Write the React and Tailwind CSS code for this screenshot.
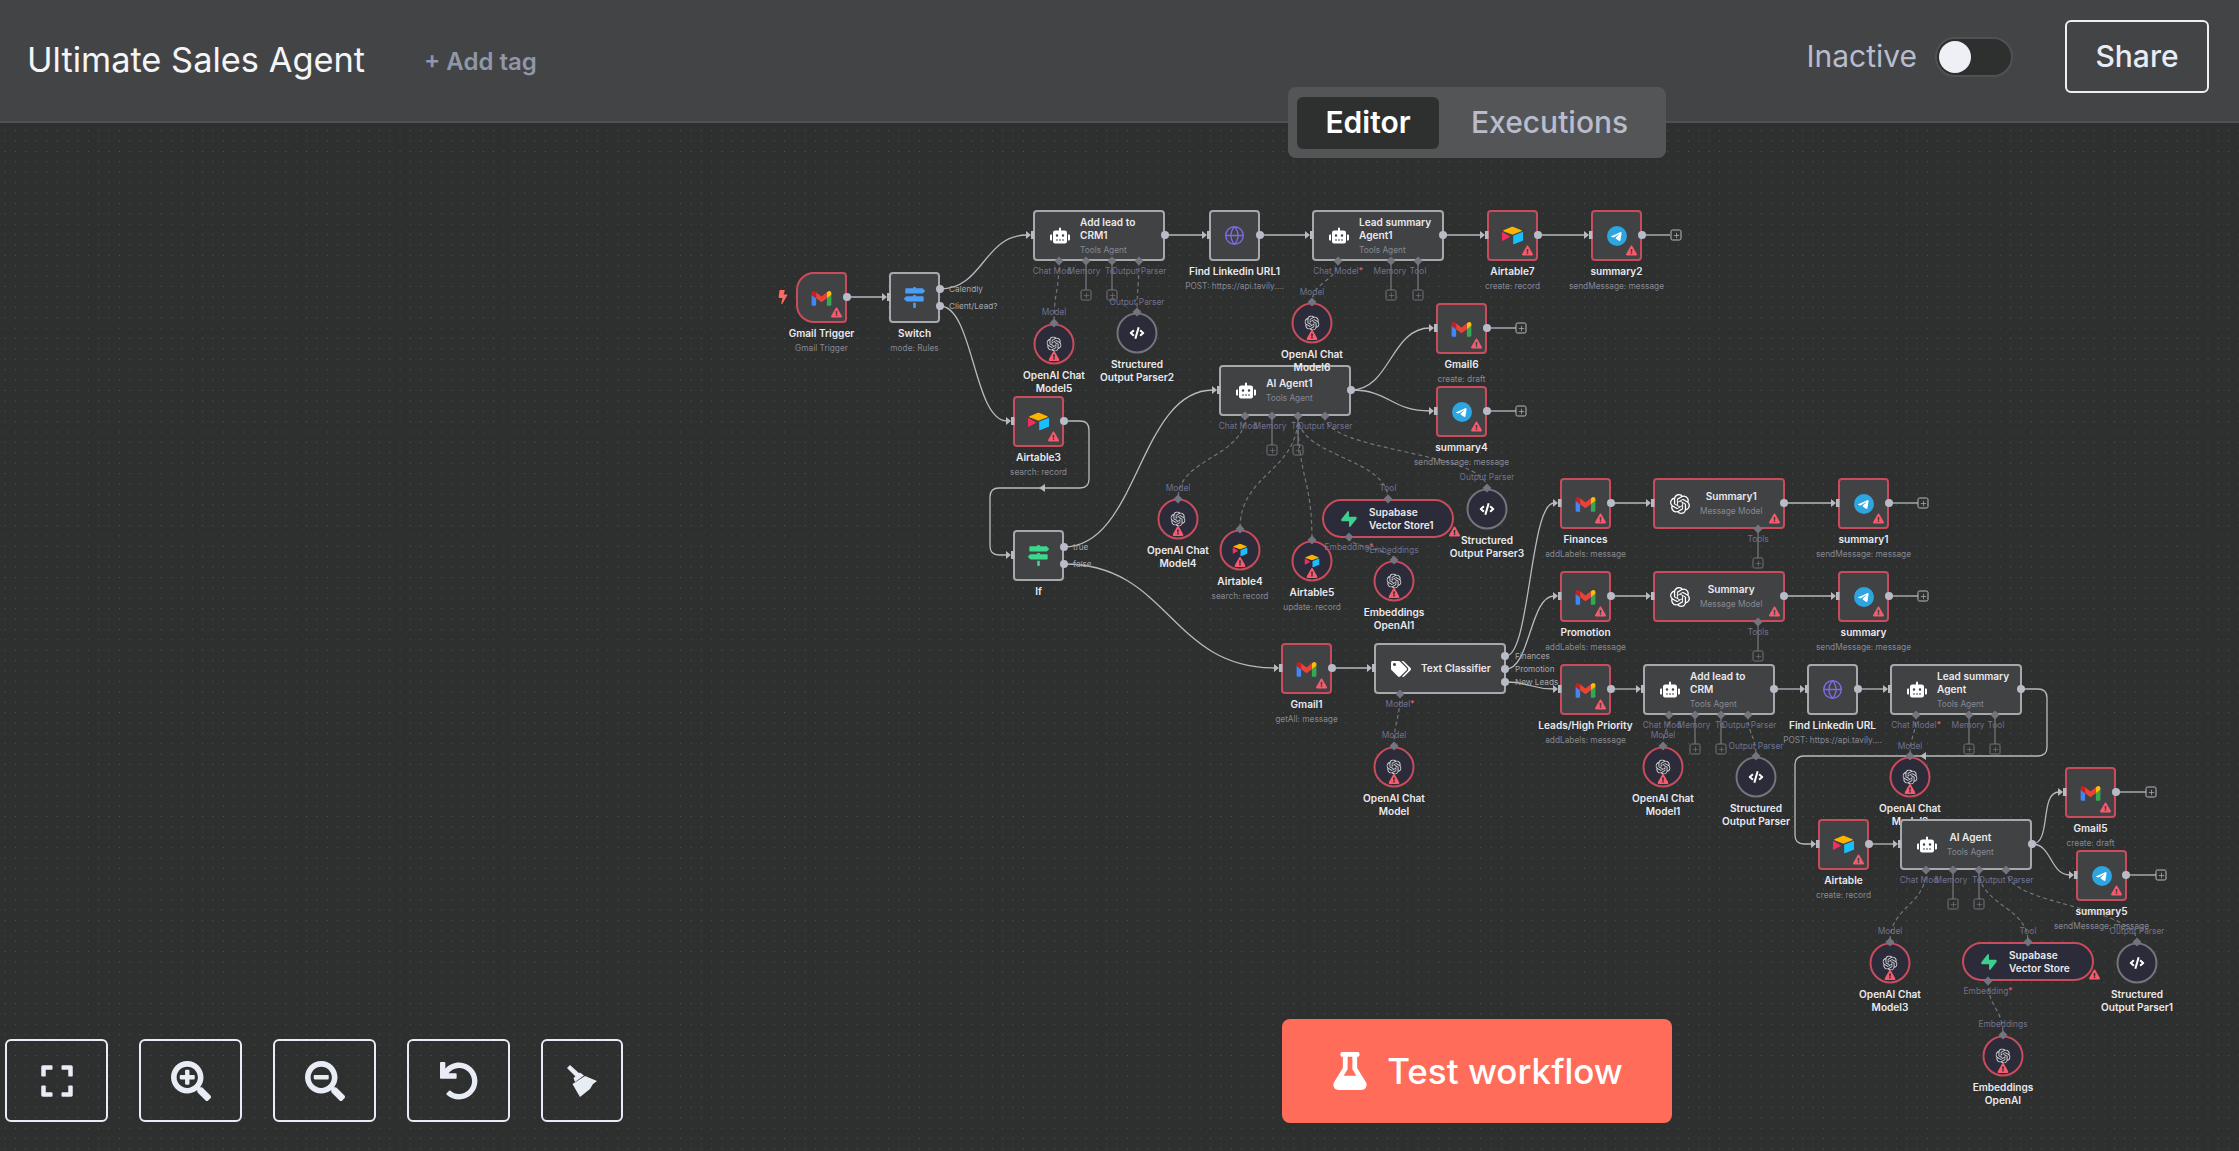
import React from "react";
import { Globe, Plus } from "lucide-react";
import {
  FaBolt,
  FaCode,
  FaExclamationTriangle,
  FaExpand,
  FaFlask,
  FaMapSigns,
  FaRobot,
  FaSearchMinus,
  FaSearchPlus,
  FaTags,
  FaUndo,
} from "react-icons/fa";
import { SiOpenai, SiSupabase, SiTelegram } from "react-icons/si";

const GmailIcon = () => (
  <svg width="21" height="16" viewBox="0 1.8 24 19.4">
    <path fill="#4285f4" d="M1.636 21h3.819v-9.27L0 7.64v11.73C0 20.27.73 21 1.636 21z" />
    <path fill="#34a853" d="M18.545 21h3.819c.904 0 1.636-.732 1.636-1.636V7.64l-5.455 4.09z" />
    <path fill="#fbbc04" d="M18.545 4.64v7.09L24 7.64V5.457c0-2.023-2.309-3.178-3.927-1.964z" />
    <path fill="#ea4335" d="M5.455 11.73V4.64L12 9.548l6.545-4.908v7.09L12 16.64z" />
    <path fill="#c5221f" d="M0 5.457V7.64l5.455 4.09V4.64L3.927 3.493C2.309 2.28 0 3.434 0 5.457z" />
  </svg>
);

const AirtableIcon = ({ size = 21 }) => (
  <svg width={size} height={size} viewBox="0 1.5 24 21">
    <path fill="#fcb400" d="M11.99 2c-.43 0-.87.09-1.28.26L1.78 5.92c-.5.2-.49.91.01 1.11l8.98 3.56c.79.31 1.67.31 2.46 0l8.98-3.56c.5-.2.5-.91.01-1.11l-8.96-3.66A3.3 3.3 0 0 0 11.99 2z" />
    <path fill="#18bfff" d="M23.4 8.06a.6.6 0 0 0-.22.04l-10.01 3.88a.6.6 0 0 0-.38.56v8.9a.6.6 0 0 0 .82.55l10.01-3.88a.6.6 0 0 0 .38-.56V8.65a.6.6 0 0 0-.6-.59z" />
    <path fill="#f82b60" d="M.68 8.1a.65.65 0 0 0-.68.72v8.54c0 .45.48.74.88.53l8.1-4.22a.36.36 0 0 0 .02-.63L.98 8.17a.54.54 0 0 0-.3-.07z" />
  </svg>
);

const TelegramIcon = () => (
  <div className="relative flex h-5 w-5 items-center justify-center">
    <div className="absolute h-3 w-3 rounded-full bg-white" />
    <SiTelegram size={20} className="relative text-[#2ca5e0]" />
  </div>
);

const BroomIcon = () => (
  <svg width="32" height="33" viewBox="0 0 32 33" fill="currentColor">
    <path d="M1 4 L4 1 L14 10 L10.5 13.5 Z" />
    <path d="M7.5 14 L14 8.5 L18 11.5 L9 18 Z" />
    <path d="M6.5 20 L19 12 L31 17 L27 20 L24 25 L14 33 L10.5 27 Z" />
  </svg>
);

const icons = {
  gmail: <GmailIcon />,
  airtable: <AirtableIcon />,
  telegram: <TelegramIcon />,
  robot: <FaRobot size={21} className="text-white" />,
  globe: <Globe size={21} strokeWidth={1.6} className="text-[#7b6be6]" />,
  switch: <FaMapSigns size={21} className="text-[#4b9ef5]" />,
  ifNode: <FaMapSigns size={21} className="text-[#3dd68c]" />,
  tags: <FaTags size={20} className="text-white" />,
  openai: <SiOpenai size={20} className="text-white" />,
  openaiSmall: <SiOpenai size={15} className="text-[#d4d4d8]" />,
  code: <FaCode size={15} className="text-white" />,
  airtableSmall: <AirtableIcon size={15} />,
  supabase: <SiSupabase size={16} className="text-[#3ecf8e]" />,
};

// page coordinates, measured off the canvas
const squares = [
  { x: 796, y: 272, name: ["Gmail Trigger"], sub: "Gmail Trigger", icon: "gmail", warn: true, trigger: true },
  { x: 889, y: 272, name: ["Switch"], sub: "mode: Rules", icon: "switch" },
  { x: 1209, y: 210, name: ["Find Linkedin URL1"], sub: "POST: https://api.tavily....", icon: "globe" },
  { x: 1013, y: 396, name: ["Airtable3"], sub: "search: record", icon: "airtable", warn: true },
  { x: 1487, y: 210, name: ["Airtable7"], sub: "create: record", icon: "airtable", warn: true },
  { x: 1591, y: 210, name: ["summary2"], sub: "sendMessage: message", icon: "telegram", warn: true },
  { x: 1436, y: 303, name: ["Gmail6"], sub: "create: draft", icon: "gmail", warn: true },
  { x: 1436, y: 386, name: ["summary4"], sub: "sendMessage: message", icon: "telegram", warn: true },
  { x: 1013, y: 530, name: ["If"], icon: "ifNode" },
  { x: 1281, y: 643, name: ["Gmail1"], sub: "getAll: message", icon: "gmail", warn: true },
  { x: 1560, y: 478, name: ["Finances"], sub: "addLabels: message", icon: "gmail", warn: true },
  { x: 1560, y: 571, name: ["Promotion"], sub: "addLabels: message", icon: "gmail", warn: true },
  { x: 1560, y: 664, name: ["Leads/High Priority"], sub: "addLabels: message", icon: "gmail", warn: true },
  { x: 1838, y: 478, name: ["summary1"], sub: "sendMessage: message", icon: "telegram", warn: true },
  { x: 1838, y: 571, name: ["summary"], sub: "sendMessage: message", icon: "telegram", warn: true },
  { x: 1807, y: 664, name: ["Find Linkedin URL"], sub: "POST: https://api.tavily....", icon: "globe" },
  { x: 1818, y: 819, name: ["Airtable"], sub: "create: record", icon: "airtable", warn: true },
  { x: 2065, y: 767, name: ["Gmail5"], sub: "create: draft", icon: "gmail", warn: true },
  { x: 2076, y: 850, name: ["summary5"], sub: "sendMessage: message", icon: "telegram", warn: true },
];

const wides = [
  { x: 1033, y: 210, name: ["Add lead to", "CRM1"], sub: "Tools Agent", icon: "robot" },
  { x: 1312, y: 210, name: ["Lead summary", "Agent1"], sub: "Tools Agent", icon: "robot" },
  { x: 1219, y: 365, name: ["AI Agent1"], sub: "Tools Agent", icon: "robot" },
  { x: 1374, y: 643, name: ["Text Classifier"], icon: "tags" },
  { x: 1653, y: 478, name: ["Summary1"], sub: "Message Model", icon: "openai", warn: true },
  { x: 1653, y: 571, name: ["Summary"], sub: "Message Model", icon: "openai", warn: true },
  { x: 1643, y: 664, name: ["Add lead to", "CRM"], sub: "Tools Agent", icon: "robot" },
  { x: 1890, y: 664, name: ["Lead summary", "Agent"], sub: "Tools Agent", icon: "robot" },
];

const circles = [
  { x: 1054, y: 344, name: ["OpenAI Chat", "Model5"], icon: "openaiSmall", warn: true },
  { x: 1137, y: 333, name: ["Structured", "Output Parser2"], icon: "code" },
  { x: 1312, y: 323, name: ["OpenAI Chat", "Model6"], icon: "openaiSmall", warn: true },
  { x: 1178, y: 519, name: ["OpenAI Chat", "Model4"], icon: "openaiSmall", warn: true },
  { x: 1240, y: 550, name: ["Airtable4"], sub: "search: record", icon: "airtableSmall", warn: true },
  { x: 1312, y: 561, name: ["Airtable5"], sub: "update: record", icon: "airtableSmall", warn: true },
  { x: 1394, y: 581, name: ["Embeddings", "OpenAI1"], icon: "openaiSmall", warn: true },
  { x: 1487, y: 509, name: ["Structured", "Output Parser3"], icon: "code" },
  { x: 1394, y: 767, name: ["OpenAI Chat", "Model"], icon: "openaiSmall", warn: true },
  { x: 1663, y: 767, name: ["OpenAI Chat", "Model1"], icon: "openaiSmall", warn: true },
  { x: 1756, y: 777, name: ["Structured", "Output Parser"], icon: "code" },
  { x: 1910, y: 777, name: ["OpenAI Chat", "Model2"], icon: "openaiSmall", warn: true },
  { x: 1890, y: 963, name: ["OpenAI Chat", "Model3"], icon: "openaiSmall", warn: true },
  { x: 2137, y: 963, name: ["Structured", "Output Parser1"], icon: "code" },
  { x: 2003, y: 1056, name: ["Embeddings", "OpenAI"], icon: "openaiSmall", warn: true },
];

const pills = [
  { x: 1322, y: 499, w: 132, name: ["Supabase", "Vector Store1"] },
  { x: 1962, y: 942, w: 132, name: ["Supabase", "Vector Store"] },
];

const curve = (x1, y1, x2, y2) => {
  const dx = Math.max((x2 - x1) / 2, 20);
  return `M${x1} ${y1} C${x1 + dx} ${y1} ${x2 - dx} ${y2} ${x2} ${y2}`;
};
const drop = (x1, y1, x2, y2) => {
  const dy = (y2 - y1) / 2;
  return `M${x1} ${y1} C${x1} ${y1 + dy} ${x2} ${y2 - dy} ${x2} ${y2}`;
};

// [x1, y1, x2, y2], ends on a node input so it gets an arrow
const solid = [
  [847, 297, 889, 297],
  [940, 289, 1033, 235],
  [940, 306, 1013, 421],
  [1165, 235, 1209, 235],
  [1260, 235, 1312, 235],
  [1443, 235, 1487, 235],
  [1538, 235, 1591, 235],
  [1064, 547, 1219, 390],
  [1064, 564, 1281, 668],
  [1351, 390, 1436, 328],
  [1351, 390, 1436, 411],
  [1332, 668, 1374, 668],
  [1506, 656, 1560, 503],
  [1506, 669, 1560, 596],
  [1506, 682, 1560, 689],
  [1611, 503, 1653, 503],
  [1784, 503, 1838, 503],
  [1611, 596, 1653, 596],
  [1784, 596, 1838, 596],
  [1611, 689, 1643, 689],
  [1774, 689, 1807, 689],
  [1858, 689, 1890, 689],
  [1869, 844, 1900, 844],
  [2032, 844, 2065, 792],
  [2032, 844, 2076, 875],
];

const loops = [
  "M1064 421 H1080 Q1089 421 1089 430 V479 Q1089 488 1080 488 H999 Q990 488 990 497 V546 Q990 555 999 555 H1006",
  "M2021 689 H2038 Q2047 689 2047 698 V747 Q2047 756 2038 756 H1804 Q1795 756 1795 765 V835 Q1795 844 1804 844 H1811",
];

// straight stubs towards a plus box
const stubs = [
  [1642, 235, 1670, 235],
  [1487, 328, 1516, 328],
  [1487, 411, 1516, 411],
  [1889, 503, 1918, 503],
  [1889, 596, 1918, 596],
  [2116, 792, 2146, 792],
  [2126, 875, 2156, 875],
];

const drops = [
  [1086, 261, 1086, 290],
  [1112, 261, 1112, 290],
  [1391, 261, 1391, 290],
  [1418, 261, 1418, 290],
  [1272, 416, 1272, 445],
  [1298, 416, 1298, 445],
  [1758, 529, 1758, 558],
  [1758, 622, 1758, 651],
  [1695, 715, 1695, 744],
  [1721, 715, 1721, 744],
  [1969, 715, 1969, 744],
  [1995, 715, 1995, 744],
  [1953, 870, 1953, 899],
  [1979, 870, 1979, 899],
];

const dashed = [
  [1059, 261, 1054, 323],
  [1139, 261, 1137, 312],
  [1338, 261, 1312, 302],
  [1245, 416, 1178, 499],
  [1298, 416, 1240, 529],
  [1298, 416, 1312, 540],
  [1298, 416, 1388, 499],
  [1325, 416, 1487, 488],
  [1349, 537, 1394, 560],
  [1400, 694, 1394, 746],
  [1669, 715, 1663, 746],
  [1748, 715, 1756, 756],
  [1916, 715, 1910, 756],
  [1926, 870, 1890, 942],
  [1979, 870, 2028, 942],
  [2006, 870, 2137, 942],
  [1988, 981, 2003, 1035],
];

const plusBoxes = [
  [1676, 235, 1], [1521, 328, 1], [1521, 411, 1], [1923, 503, 1], [1923, 596, 1], [2151, 792, 1], [2161, 875, 1],
  [1086, 295], [1112, 295], [1391, 295], [1418, 295], [1272, 450], [1298, 450], [1758, 563], [1758, 656],
  [1695, 749], [1721, 749], [1969, 749], [1995, 749], [1953, 904], [1979, 904],
];

const outPorts = [
  [847, 297], [940, 289], [940, 306], [1165, 235], [1260, 235], [1443, 235], [1538, 235], [1642, 235], [1064, 421],
  [1351, 390], [1487, 328], [1487, 411], [1064, 547], [1064, 564], [1332, 668], [1505, 656], [1505, 669], [1505, 682],
  [1611, 503], [1784, 503], [1889, 503], [1611, 596], [1784, 596], [1889, 596], [1611, 689], [1774, 689], [1858, 689],
  [2021, 689], [1869, 844], [2032, 844], [2116, 792], [2126, 875],
];

const diamonds = [
  [1059, 261], [1086, 261], [1112, 261], [1139, 261], [1054, 323], [1137, 312],
  [1338, 261], [1391, 261], [1418, 261], [1312, 302],
  [1245, 416], [1272, 416], [1298, 416], [1325, 416], [1178, 499], [1240, 529], [1312, 540], [1388, 499], [1487, 488],
  [1349, 537], [1394, 560], [1400, 694], [1394, 746], [1758, 529], [1758, 622],
  [1669, 715], [1695, 715], [1721, 715], [1748, 715], [1663, 746], [1756, 756],
  [1916, 715], [1969, 715], [1995, 715], [1910, 756],
  [1926, 870], [1953, 870], [1979, 870], [2006, 870], [1890, 942], [2028, 942], [2137, 942], [1988, 981], [2003, 1035],
];

const agentLabels = (x, y) => [
  ["Chat Mod", x + 19, y],
  ["Memory", x + 51, y],
  ["To", x + 77, y],
  ["Output Parser", x + 106, y],
];
const leadLabels = (x, y) => [
  ["Chat Model", x + 26, y, true],
  ["Memory", x + 78, y],
  ["Tool", x + 106, y],
];

const portLabels = [
  ...agentLabels(1033, 271),
  ...leadLabels(1312, 271),
  ...agentLabels(1219, 426),
  ...agentLabels(1643, 725),
  ...leadLabels(1890, 725),
  ...agentLabels(1900, 880),
  ["Model", 1054, 312],
  ["Output Parser", 1137, 302],
  ["Model", 1312, 292],
  ["Model", 1178, 488],
  ["Tool", 1388, 488],
  ["Output Parser", 1487, 477],
  ["Embedding", 1349, 547, true],
  ["Embeddings", 1394, 550],
  ["Model", 1400, 704, true],
  ["Model", 1394, 735],
  ["Tools", 1758, 539],
  ["Tools", 1758, 632],
  ["Model", 1663, 735],
  ["Output Parser", 1756, 746],
  ["Model", 1910, 746],
  ["Model", 1890, 931],
  ["Tool", 2028, 931],
  ["Output Parser", 2137, 931],
  ["Embedding", 1988, 991, true],
  ["Embeddings", 2003, 1024],
];

const outputLabels = [
  ["Calendly", 949, 289],
  ["Client/Lead?", 949, 306],
  ["true", 1073, 547],
  ["false", 1073, 564],
  ["Finances", 1515, 656],
  ["Promotion", 1515, 669],
  ["New Leads", 1515, 682],
];

const Warn = ({ className }) => (
  <FaExclamationTriangle size={11} className={`absolute text-[#f45b6c] ${className}`} />
);

const Caption = ({ cx, top, name, sub }) => (
  <div
    className="absolute flex -translate-x-1/2 flex-col items-center whitespace-nowrap text-center"
    style={{ left: cx, top }}
  >
    {name.map((line) => (
      <div key={line} className="text-[10.1px] font-semibold leading-[13px] text-[#eaeaee]">
        {line}
      </div>
    ))}
    {sub && <div className="mt-[2px] text-[8.3px] leading-[12px] text-[#858994]">{sub}</div>}
  </div>
);

const SquareNode = ({ n }) => (
  <>
    <div
      className={`absolute flex h-[51px] w-[51px] items-center justify-center border-2 bg-[#414244] ${
        n.warn ? "border-[#c94c5c]" : "border-[#a6a8ae]"
      } ${n.trigger ? "rounded-l-[18px] rounded-r-[4px]" : "rounded-[4px]"}`}
      style={{ left: n.x, top: n.y }}
    >
      {icons[n.icon]}
      {n.warn && <Warn className="bottom-[3px] right-[3px]" />}
    </div>
    <Caption cx={n.x + 25.5} top={n.y + 55} name={n.name} sub={n.sub} />
  </>
);

const WideNode = ({ n }) => (
  <div
    className={`absolute flex h-[51px] w-[132px] items-center gap-[10px] rounded-[4px] border-2 bg-[#414244] pl-[15px] ${
      n.warn ? "border-[#c94c5c]" : "border-[#a6a8ae]"
    }`}
    style={{ left: n.x, top: n.y }}
  >
    <div className="flex w-5 shrink-0 justify-center">{icons[n.icon]}</div>
    <div className={`flex flex-col whitespace-nowrap ${n.name.length > 1 ? "items-start" : "items-center"}`}>
      {n.name.map((line) => (
        <div key={line} className="text-[10.1px] font-semibold leading-[13px] text-[#eaeaee]">
          {line}
        </div>
      ))}
      {n.sub && <div className="mt-[2px] text-[8.3px] leading-[12px] text-[#858994]">{n.sub}</div>}
    </div>
    {n.warn && <Warn className="bottom-[3px] right-[3px]" />}
  </div>
);

const CircleNode = ({ n }) => (
  <>
    <div
      className={`absolute flex h-[41px] w-[41px] -translate-x-1/2 -translate-y-1/2 items-center justify-center rounded-full border-2 bg-[#2b2b39] ${
        n.warn ? "border-[#c94c5c]" : "border-[#74747c]"
      }`}
      style={{ left: n.x, top: n.y }}
    >
      {icons[n.icon]}
      {n.warn && <Warn className="bottom-[1px] left-[13px]" />}
    </div>
    <Caption cx={n.x} top={n.y + 25} name={n.name} sub={n.sub} />
  </>
);

const PillNode = ({ n }) => (
  <div
    className="absolute flex h-[39px] items-center gap-[10px] rounded-[20px] border-2 border-[#c94c5c] bg-[#2b2b39] pl-[15px]"
    style={{ left: n.x, top: n.y, width: n.w }}
  >
    <div className="flex w-5 shrink-0 justify-center">{icons.supabase}</div>
    <div className="whitespace-nowrap text-[10.1px] font-semibold leading-[13px] text-[#eaeaee]">
      {n.name.map((line) => (
        <div key={line}>{line}</div>
      ))}
    </div>
    <Warn className="bottom-[-1px] right-[-8px]" />
  </div>
);

const Edges = () => (
  <svg className="absolute inset-0 h-full w-full" fill="none">
    {solid.map(([x1, y1, x2, y2]) => (
      <path key={`${x1}-${y1}-${x2}-${y2}`} d={curve(x1, y1, x2 - 6, y2)} stroke="#b8bac0" strokeWidth="1.3" />
    ))}
    {loops.map((d) => (
      <path key={d} d={d} stroke="#b8bac0" strokeWidth="1.3" />
    ))}
    {stubs.map(([x1, y1, x2, y2]) => (
      <path key={`${x1}-${y1}`} d={`M${x1} ${y1} H${x2}`} stroke="#b8bac0" strokeWidth="1.3" />
    ))}
    {drops.map(([x1, y1, x2, y2]) => (
      <path key={`${x1}-${y1}`} d={`M${x1} ${y1} V${y2}`} stroke="#74747c" strokeWidth="1.3" />
    ))}
    {dashed.map(([x1, y1, x2, y2]) => (
      <path key={`${x1}-${y1}-${x2}`} d={drop(x1, y1, x2, y2)} stroke="#74747c" strokeWidth="1.2" strokeDasharray="4 3" />
    ))}
    <path d="M1045 484 L1039 488 L1045 492 Z" fill="#b8bac0" />
    <path d="M1926 752 L1920 756 L1926 760 Z" fill="#b8bac0" />
  </svg>
);

const Ports = () => {
  const inputs = [
    ...solid.map(([, , x2, y2]) => [x2, y2]),
    [1013, 555],
    [1818, 844],
  ];
  return (
    <svg className="absolute inset-0 z-20 h-full w-full">
      {inputs.map(([x, y], i) => (
        <g key={i} fill="#b8bac0">
          <path d={`M${x - 7} ${y - 4} L${x - 2} ${y} L${x - 7} ${y + 4} Z`} />
          <rect x={x - 2} y={y - 4} width="3.5" height="8" />
        </g>
      ))}
      {outPorts.map(([x, y], i) => (
        <circle key={i} cx={x} cy={y} r="4" fill="#b8bcc6" />
      ))}
      {diamonds.map(([x, y], i) => (
        <path key={i} d={`M${x} ${y - 4.5} L${x + 4.5} ${y} L${x} ${y + 4.5} L${x - 4.5} ${y} Z`} fill="#74747f" />
      ))}
    </svg>
  );
};

const TriggerBolt = () => (
  <div className="absolute left-[776px] top-[290px] text-[#ff6b5e]">
    <FaBolt size={14} />
  </div>
);

const ToolButton = ({ className, children }) => (
  <button className={`flex h-[83px] items-center justify-center rounded-[6px] border-2 border-[#e8ecf5] text-[#e8ecf5] ${className}`}>
    {children}
  </button>
);

export default function App() {
  return (
    <div className="relative flex h-screen w-screen flex-col overflow-hidden bg-[#2e2f2f] font-['Inter',sans-serif]">
      {/* Header */}
      <div className="flex h-[123px] shrink-0 items-center border-b-2 border-[#505153] bg-[#434446] pb-[8px] pl-[27px] pr-[30px]">
        <div className="mt-[7px] text-[34.4px] font-normal text-[#f4f5f8]">Ultimate Sales Agent</div>
        <div className="ml-[59px] mt-[10px] text-[24px] font-semibold text-[#8f97a8]">+ Add tag</div>
        <div className="ml-auto text-[30px] text-[#b8bccd]">Inactive</div>
        <div className="ml-[18px] flex h-[40px] w-[78px] items-center rounded-full border-2 border-[#505155] bg-[#2e2f2f] pl-[2px]">
          <div className="h-8 w-8 rounded-full bg-[#eff0f6]" />
        </div>
        <button className="ml-[52px] h-[73px] w-[144px] rounded-[6px] border-2 border-[#eef0f5] text-[30px] font-medium text-[#e8ecf5]">
          Share
        </button>
      </div>

      {/* Canvas */}
      <div className="relative flex-1 bg-[radial-gradient(#565757_0.7px,transparent_0.8px)] bg-[size:10.4px_10.4px] bg-[position:0_2.5px]" />

      {/* Graph, coordinates are page coordinates */}
      <div className="absolute inset-0">
        <Edges />
        {outputLabels.map(([text, x, y]) => (
          <div
            key={text}
            className="absolute -translate-y-1/2 whitespace-nowrap text-[8.2px] text-[#a6a9b0]"
            style={{ left: x, top: y }}
          >
            {text}
          </div>
        ))}
        {wides.map((n) => (
          <WideNode key={n.name.join()} n={n} />
        ))}
        {squares.map((n) => (
          <SquareNode key={n.name[0]} n={n} />
        ))}
        {circles.map((n) => (
          <CircleNode key={n.name.join()} n={n} />
        ))}
        {pills.map((n) => (
          <PillNode key={n.name[1]} n={n} />
        ))}
        {/* drawn last: it covers the caption of the model above it */}
        <WideNode n={{ x: 1900, y: 819, name: ["AI Agent"], sub: "Tools Agent", icon: "robot" }} />
        <TriggerBolt />
        {plusBoxes.map(([x, y, bright]) => (
          <div
            key={`${x}-${y}`}
            className={`absolute z-20 flex h-[11px] w-[11px] -translate-x-1/2 -translate-y-1/2 items-center justify-center rounded-[2px] border ${
              bright ? "border-[#b8bac0] text-[#b8bac0]" : "border-[#74747c] text-[#74747c]"
            }`}
            style={{ left: x, top: y }}
          >
            <Plus size={8} strokeWidth={2} />
          </div>
        ))}
        {portLabels.map(([text, x, y, required]) => (
          <div
            key={`${text}-${x}-${y}`}
            className="absolute z-20 -translate-x-1/2 -translate-y-1/2 whitespace-nowrap text-[8.4px] text-[#6e7290]"
            style={{ left: x, top: y }}
          >
            {text}
            {required && <span className="text-[#f45b6c]">*</span>}
          </div>
        ))}
        <Ports />
      </div>

      {/* Header tabs */}
      <div className="absolute left-[1288px] top-[87px] z-30 flex h-[71px] w-[378px] items-center rounded-[8px] bg-[#545557] pl-[9px]">
        <div className="flex h-[52px] w-[142px] items-center justify-center rounded-[6px] bg-[#2e2f2f] text-[30px] font-semibold text-white">
          Editor
        </div>
        <div className="ml-[32px] text-[30px] font-medium text-[#b8bccd]">Executions</div>
      </div>

      {/* Canvas controls */}
      <div className="absolute bottom-[29px] left-[5px] z-30 flex gap-[31px]">
        <ToolButton className="w-[103px]">
          <FaExpand size={36} />
        </ToolButton>
        <ToolButton className="w-[103px]">
          <FaSearchPlus size={40} />
        </ToolButton>
        <ToolButton className="w-[103px]">
          <FaSearchMinus size={40} />
        </ToolButton>
        <ToolButton className="w-[103px]">
          <FaUndo size={38} />
        </ToolButton>
        <ToolButton className="w-[82px]">
          <BroomIcon />
        </ToolButton>
      </div>
      <button className="absolute bottom-[28px] left-[1282px] z-30 flex h-[104px] w-[390px] items-center justify-center gap-[18px] rounded-[8px] bg-[#ff6d5a] text-[35px] font-medium text-white">
        <FaFlask size={38} />
        Test workflow
      </button>
    </div>
  );
}
